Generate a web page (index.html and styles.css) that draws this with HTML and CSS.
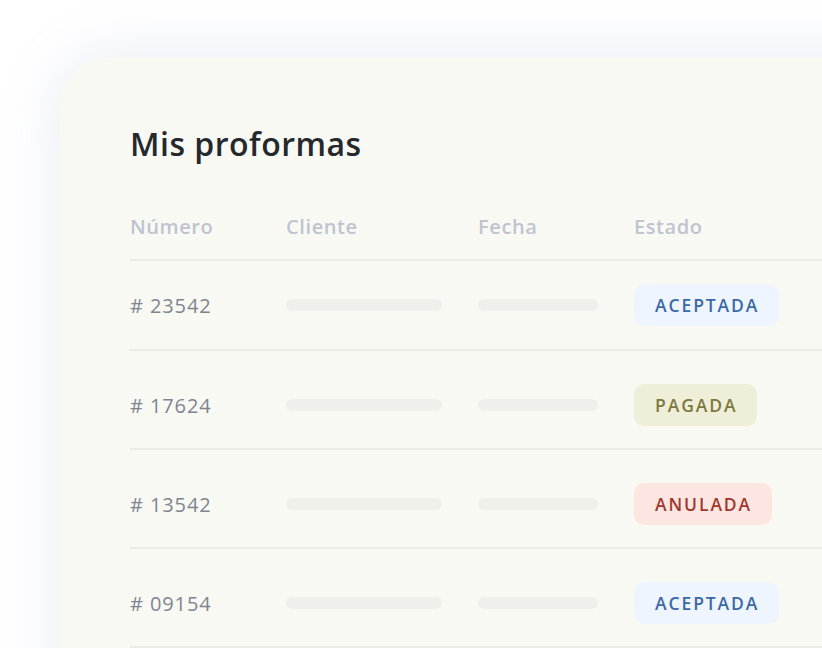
FILE: index.html
```html
<!DOCTYPE html>
<html lang="es">
<head>
<meta charset="utf-8">
<title>Mis proformas</title>
<link rel="stylesheet" href="styles.css">
</head>
<body>
<div class="stage">
  <section class="card">
    <h1 class="title">Mis proformas</h1>
    <div class="table">
      <div class="row head">
        <div class="cell">Número</div>
        <div class="cell">Cliente</div>
        <div class="cell">Fecha</div>
        <div class="cell">Estado</div>
      </div>
      <div class="row">
        <div class="cell num"># 23542</div>
        <div class="cell"><span class="bar bar-client"></span></div>
        <div class="cell"><span class="bar bar-date"></span></div>
        <div class="cell"><span class="badge badge-accepted">ACEPTADA</span></div>
      </div>
      <div class="row">
        <div class="cell num"># 17624</div>
        <div class="cell"><span class="bar bar-client"></span></div>
        <div class="cell"><span class="bar bar-date"></span></div>
        <div class="cell"><span class="badge badge-paid">PAGADA</span></div>
      </div>
      <div class="row">
        <div class="cell num"># 13542</div>
        <div class="cell"><span class="bar bar-client"></span></div>
        <div class="cell"><span class="bar bar-date"></span></div>
        <div class="cell"><span class="badge badge-void">ANULADA</span></div>
      </div>
      <div class="row">
        <div class="cell num"># 09154</div>
        <div class="cell"><span class="bar bar-client"></span></div>
        <div class="cell"><span class="bar bar-date"></span></div>
        <div class="cell"><span class="badge badge-accepted">ACEPTADA</span></div>
      </div>
    </div>
  </section>
</div>
</body>
</html>
```
FILE: styles.css
```css
* { box-sizing: border-box; }
html, body {
  margin: 0;
  padding: 0;
  background: #ffffff;
  width: 822px;
  height: 648px;
  overflow: hidden;
}
body {
  font-family: "Open Sans", "Noto Sans", sans-serif;
}
.stage {
  padding: 57px 0 0 60px;
}
.card {
  width: 900px;
  height: 700px;
  background: #f9f9f4;
  border-radius: 50px 0 0 0;
  box-shadow: 0 0 60px rgba(140, 152, 200, 0.20);
  padding: 0 0 0 70px;
  display: flex;
  flex-direction: column;
}
.title {
  margin: 66px 0 0 0;
  font-size: 32px;
  line-height: 42px;
  font-weight: 600;
  color: #25282c;
  letter-spacing: 0.5px;
}
.table {
  margin-top: 48px;
  display: flex;
  flex-direction: column;
}
.row {
  display: grid;
  grid-template-columns: 156px 192px 156px 1fr;
  align-items: center;
  border-bottom: 2px solid #ecebe5;
  padding: 33px 0 24px 0;
  height: 99px;
}
.row.head {
  padding: 0 0 18px 0;
  height: auto;
}
.row.head + .row {
  padding-top: 23px;
  height: 90px;
}
.head .cell {
  font-size: 20px;
  line-height: 28px;
  color: #bec4d0;
  font-weight: 600;
  letter-spacing: 0.6px;
}
.num {
  font-size: 20px;
  color: #7e8590;
  font-weight: 500;
  letter-spacing: 0.9px;
}
.bar {
  display: block;
  height: 12px;
  border-radius: 6px;
  background: #efefeb;
}
.bar-client { width: 156px; }
.bar-date { width: 120px; }
.badge {
  display: inline-flex;
  align-items: center;
  height: 42px;
  padding: 0 20px 0 21px;
  border-radius: 10px;
  font-size: 17.5px;
  font-weight: 600;
  letter-spacing: 1.9px;
}
.badge-accepted { background: #eef5fe; color: #3b69a5; }
.badge-paid { background: #eeeed9; color: #7d783f; }
.badge-void { background: #fde6e2; color: #a0382f; }
```
